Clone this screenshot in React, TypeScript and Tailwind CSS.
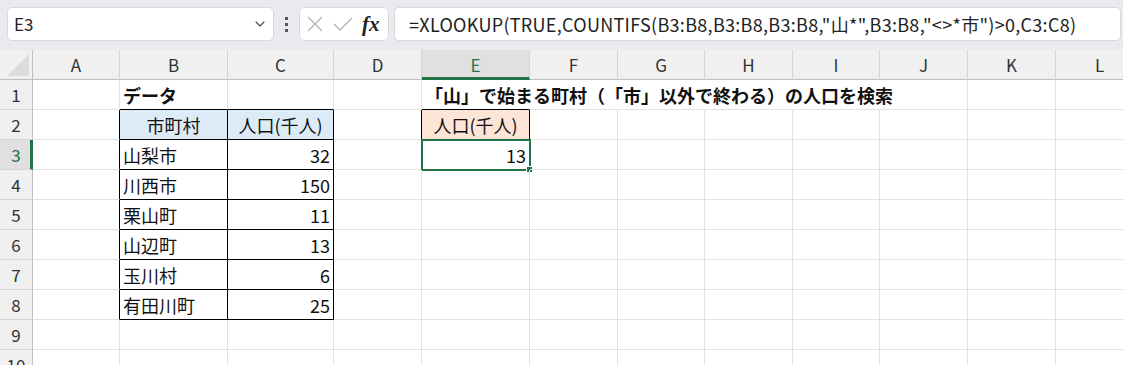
import { ChevronDown } from 'lucide-react';

type Cell = {
  text?: string;
  align?: 'left' | 'right' | 'center';
  bold?: boolean;
  bg?: string;
  r?: 'black' | 'none';
  b?: 'black';
  selected?: boolean;
};

const COLS = [
  { id: 'A', w: 'w-[87px]' },
  { id: 'B', w: 'w-[108px]' },
  { id: 'C', w: 'w-[106px]' },
  { id: 'D', w: 'w-[88px]' },
  { id: 'E', w: 'w-[108px]' },
  { id: 'F', w: 'w-[88px]' },
  { id: 'G', w: 'w-[87px]' },
  { id: 'H', w: 'w-[88px]' },
  { id: 'I', w: 'w-[87px]' },
  { id: 'J', w: 'w-[88px]' },
  { id: 'K', w: 'w-[88px]' },
  { id: 'L', w: 'w-[88px]' },
];

const ROWS = [1, 2, 3, 4, 5, 6, 7, 8, 9, 10];

const towns: [string, string][] = [
  ['山梨市', '32'],
  ['川西市', '150'],
  ['栗山町', '11'],
  ['山辺町', '13'],
  ['玉川村', '6'],
  ['有田川町', '25'],
];

const cells: Record<string, Cell> = {
  B1: { text: 'データ', bold: true, b: 'black' },
  C1: { b: 'black' },
  E1: { text: '「山」で始まる町村（「市」以外で終わる）の人口を検索', bold: true, b: 'black', r: 'none' },
  F1: { r: 'none' },
  G1: { r: 'none' },
  H1: { r: 'none' },
  I1: { r: 'none' },
  A2: { r: 'black' },
  B2: { text: '市町村', align: 'center', bg: 'bg-[#ddebf7]', r: 'black', b: 'black' },
  C2: { text: '人口(千人)', align: 'center', bg: 'bg-[#ddebf7]', r: 'black', b: 'black' },
  D2: { r: 'black' },
  E2: { text: '人口(千人)', align: 'center', bg: 'bg-[#fce4d6]', r: 'black', b: 'black' },
  E3: { text: '13', align: 'right', selected: true },
};

towns.forEach(([name, pop], i) => {
  const row = i + 3;
  cells[`A${row}`] = { r: 'black' };
  cells[`B${row}`] = { text: name, r: 'black', b: 'black' };
  cells[`C${row}`] = { text: pop, align: 'right', r: 'black', b: 'black' };
});

function SheetCell({ w, cell }: { w: string; cell?: Cell }) {
  const c = cell ?? {};
  const right =
    c.r === 'black' ? 'border-r-black' : c.r === 'none' ? 'border-r-transparent' : 'border-r-[#e1e1e1]';
  const bottom = c.b === 'black' ? 'border-b-black' : 'border-b-[#e1e1e1]';
  const align =
    c.align === 'right' ? 'justify-end pr-[3px]' : c.align === 'center' ? 'justify-center' : 'justify-start pl-[3px]';
  return (
    <div
      className={`relative flex h-[30px] shrink-0 items-center border-r border-b ${w} ${right} ${bottom} ${align} ${
        c.bg ?? ''
      }`}
    >
      {c.text && (
        <span className={`whitespace-nowrap text-[18px] leading-none text-[#111] ${c.bold ? 'font-bold' : ''}`}>
          {c.text}
        </span>
      )}
      {c.selected && (
        <div className="absolute -top-[1px] -left-[1px] h-[32px] w-[110px] border-2 border-[#217346]">
          <div className="absolute -right-[4px] -bottom-[4px] h-[7px] w-[7px] border border-white bg-[#217346]" />
        </div>
      )}
    </div>
  );
}

function Toolbar() {
  return (
    <div className="flex h-[50px] shrink-0 items-start bg-[#e8eaef] pt-[7px] pl-[7px]">
      <div className="flex h-[34px] w-[267px] items-center justify-between rounded-[5px] border border-[#d6d8dc] bg-white pr-[5px] pl-[6px]">
        <span className="text-[17px] text-[#222]">E3</span>
        <ChevronDown className="h-[16px] w-[16px] text-[#444]" strokeWidth={1.6} />
      </div>
      <div className="mt-[10px] ml-[11px] flex w-[3px] flex-col gap-[3px]">
        <span className="h-[3px] w-[3px] bg-[#555]" />
        <span className="h-[3px] w-[3px] bg-[#555]" />
        <span className="h-[3px] w-[3px] bg-[#555]" />
      </div>
      <div className="ml-[11px] flex h-[34px] w-[90px] items-center rounded-[5px] border border-[#d6d8dc] bg-white pl-[6px]">
        <svg width="18" height="18" viewBox="0 0 18 18" className="shrink-0">
          <path d="M2 2 L16 16 M16 2 L2 16" stroke="#b4b4b4" strokeWidth="1.4" fill="none" />
        </svg>
        <svg width="20" height="18" viewBox="0 0 20 18" className="ml-[9px] shrink-0">
          <path d="M1 9 L7 15 L19 3" stroke="#b4b4b4" strokeWidth="1.4" fill="none" />
        </svg>
        <span className="ml-[9px] font-['Liberation_Serif',serif] text-[21px] leading-none font-bold text-[#222] italic">
          fx
        </span>
      </div>
      <div className="mr-[2px] ml-[5px] flex h-[34px] flex-1 items-center rounded-[5px] border border-[#d6d8dc] bg-white pl-[14px]">
        <span className="whitespace-nowrap text-[18px] tracking-[0.3px] text-[#222]">
          =XLOOKUP(TRUE,COUNTIFS(B3:B8,B3:B8,B3:B8,"山*",B3:B8,"&lt;&gt;*市")&gt;0,C3:C8)
        </span>
      </div>
    </div>
  );
}

export default function App() {
  return (
    <div className="h-[365px] w-[1123px] overflow-hidden bg-white font-['Noto_Sans_CJK_JP','Noto_Sans',sans-serif] [text-spacing-trim:space-all]">
      <Toolbar />

      {/* column headers */}
      <div className="flex h-[30px] bg-[#f0f0f0]">
        <div className="flex h-[30px] w-[33px] shrink-0 items-end justify-end border-r border-b border-r-[#bfbfbf] border-b-[#bfbfbf] pr-[3px] pb-[3px]">
          <svg width="22" height="22" viewBox="0 0 22 22">
            <path d="M22 0 L22 22 L0 22 Z" fill="#dcdcdc" />
          </svg>
        </div>
        {COLS.map((col) => {
          const sel = col.id === 'E';
          return (
            <div
              key={col.id}
              className={`flex h-[30px] shrink-0 items-center justify-center border-r ${col.w} ${
                sel
                  ? 'border-b-[3px] border-r-[#d4d4d4] border-b-[#217346] bg-[#e0e0e0] pt-[2px] text-[#217346]'
                  : 'border-b border-r-[#d4d4d4] border-b-[#bfbfbf] text-[#333]'
              }`}
            >
              <span className="text-[17px] leading-none">{col.id}</span>
            </div>
          );
        })}
      </div>

      {ROWS.map((row) => {
        const sel = row === 3;
        return (
          <div key={row} className="flex">
            <div
              className={`flex h-[30px] w-[33px] shrink-0 items-center justify-center border-b border-b-[#d4d4d4] ${
                sel
                  ? 'border-r-[3px] border-r-[#217346] bg-[#e0e0e0] pl-[2px] text-[#217346]'
                  : 'border-r border-r-[#bfbfbf] bg-[#f0f0f0] text-[#333]'
              }`}
            >
              <span className="text-[17px] leading-none">{row}</span>
            </div>
            {COLS.map((col) => (
              <SheetCell key={col.id} w={col.w} cell={cells[`${col.id}${row}`]} />
            ))}
          </div>
        );
      })}
    </div>
  );
}
